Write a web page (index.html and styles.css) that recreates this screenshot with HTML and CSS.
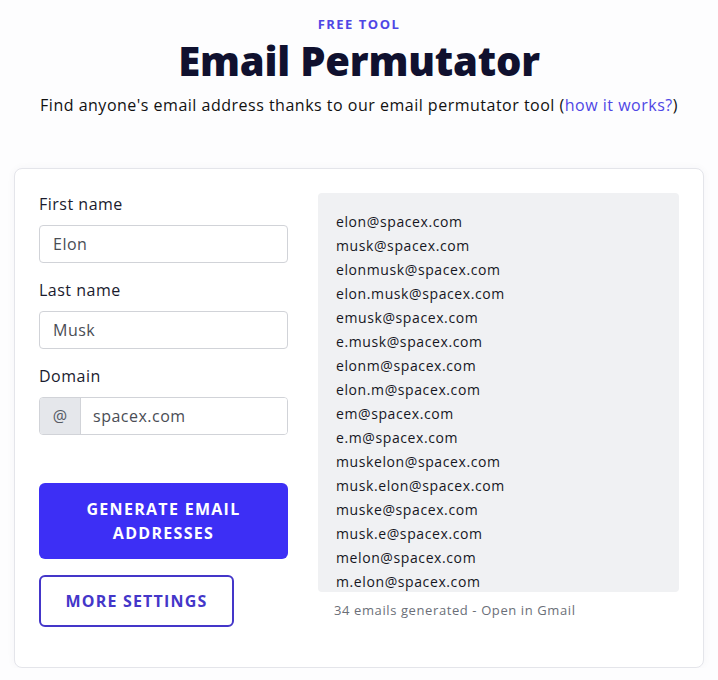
FILE: index.html
```html
<!DOCTYPE html>
<html lang="en">
<head>
<meta charset="utf-8">
<title>Email Permutator</title>
<link rel="stylesheet" href="styles.css">
</head>
<body>
<header class="hero">
  <div class="eyebrow">FREE TOOL</div>
  <h1 class="title">Email Permutator</h1>
  <p class="lead">Find anyone's email address thanks to our email permutator tool (<a href="#">how it works?</a>)</p>
</header>
<main class="wrap">
  <section class="card">
    <form class="form">
      <label class="label" for="fn">First name</label>
      <input class="input" id="fn" type="text" value="Elon">
      <label class="label" for="ln">Last name</label>
      <input class="input" id="ln" type="text" value="Musk">
      <label class="label" for="dm">Domain</label>
      <div class="group">
        <span class="addon">@</span>
        <input class="input input-group" id="dm" type="text" value="spacex.com">
      </div>
      <button class="btn-primary" type="button">GENERATE EMAIL ADDRESSES</button>
      <button class="btn-outline" type="button">MORE SETTINGS</button>
    </form>
    <div class="results-col">
      <div class="results">
        <div>elon@spacex.com</div>
        <div>musk@spacex.com</div>
        <div>elonmusk@spacex.com</div>
        <div>elon.musk@spacex.com</div>
        <div>emusk@spacex.com</div>
        <div>e.musk@spacex.com</div>
        <div>elonm@spacex.com</div>
        <div>elon.m@spacex.com</div>
        <div>em@spacex.com</div>
        <div>e.m@spacex.com</div>
        <div>muskelon@spacex.com</div>
        <div>musk.elon@spacex.com</div>
        <div>muske@spacex.com</div>
        <div>musk.e@spacex.com</div>
        <div>melon@spacex.com</div>
        <div>m.elon@spacex.com</div>
      </div>
      <div class="meta">34 emails generated - Open in Gmail</div>
    </div>
  </section>
</main>
</body>
</html>
```

FILE: styles.css
```css
* { box-sizing: border-box; }
html, body { margin: 0; padding: 0; }
body {
  background: #fdfdfe;
  font-family: "Open Sans", "DejaVu Sans", sans-serif;
  color: #1a1b2e;
}
.hero {
  text-align: center;
  padding-top: 15px;
}
.eyebrow {
  font-size: 13px;
  line-height: 18px;
  font-weight: 700;
  letter-spacing: 1.5px;
  color: #4f46e5;
}
.title {
  margin: 4px 0 0;
  font-size: 40px;
  line-height: 48px;
  font-weight: 800;
  color: #10112f;
  letter-spacing: -0.2px;
}
.lead {
  margin: 8px 0 0;
  font-size: 16px;
  line-height: 24px;
  letter-spacing: 0.5px;
  color: #111;
}
.lead a {
  color: #4f46e5;
  text-decoration: none;
}
.wrap {
  padding: 51px 14px 0;
}
.card {
  background: #fff;
  border: 1px solid #e4e5ea;
  border-radius: 8px;
  box-shadow: 0 0 8px rgba(30, 30, 80, 0.04);
  padding: 24px;
  display: grid;
  grid-template-columns: 249px 1fr;
  column-gap: 30px;
  height: 500px;
}
.form {
  display: flex;
  flex-direction: column;
  align-items: flex-start;
}
.label {
  font-size: 16px;
  line-height: 24px;
  letter-spacing: 0.5px;
  color: #1a1b2e;
  margin-top: -1px;
  margin-bottom: 9px;
}
.input {
  width: 100%;
  height: 38px;
  border: 1px solid #d1d3d8;
  border-radius: 4px;
  padding: 0 13px;
  font: inherit;
  font-size: 16px;
  letter-spacing: 0.5px;
  color: #4a4d55;
  background: #fff;
  margin-bottom: 16px;
  outline: none;
}
.group {
  display: flex;
  width: 100%;
  height: 38px;
  border: 1px solid #d1d3d8;
  border-radius: 4px;
  overflow: hidden;
}
.addon {
  width: 41px;
  flex: none;
  display: flex;
  align-items: center;
  justify-content: center;
  background: #e5e7eb;
  border-right: 1px solid #d1d3d8;
  color: #555a63;
  font-size: 16px;
}
.input-group {
  border: 0;
  border-radius: 0;
  height: 36px;
  margin: 0;
  padding-left: 12px;
}
.btn-primary {
  margin-top: 48px;
  width: 100%;
  height: 76px;
  border: 0;
  border-radius: 6px;
  background: #3d2ff5;
  color: #fff;
  font: inherit;
  font-size: 16px;
  font-weight: 700;
  letter-spacing: 1.3px;
  line-height: 24px;
  padding: 0 40px;
}
.btn-outline {
  margin-top: 16px;
  width: 195px;
  height: 52px;
  border: 2px solid #4436c9;
  border-radius: 6px;
  background: #fff;
  color: #4436c9;
  font: inherit;
  font-size: 16px;
  font-weight: 700;
  letter-spacing: 1.2px;
  padding: 0;
}
.results-col {
  display: flex;
  flex-direction: column;
}
.results {
  height: 399px;
  overflow: hidden;
  background: #f0f1f3;
  border-radius: 4px;
  padding: 17px 18px;
  font-size: 14px;
  line-height: 24px;
  letter-spacing: 0.6px;
  color: #16171f;
}
.meta {
  margin-top: 8px;
  padding-left: 16px;
  font-size: 13px;
  line-height: 20px;
  letter-spacing: 0.6px;
  color: #6b6f78;
}
```
